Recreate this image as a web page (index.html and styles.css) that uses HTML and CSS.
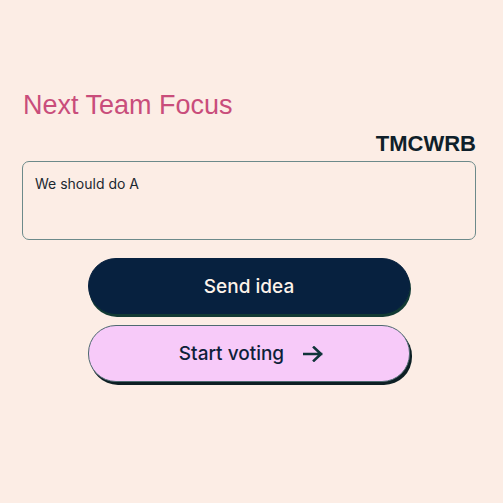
FILE: index.html
```html
<!DOCTYPE html>
<html>
<head>
<meta charset="utf-8">
<link rel="stylesheet" href="styles.css">
</head>
<body>
<main class="page">
  <h1 class="title">Next Team Focus</h1>
  <div class="code">TMCWRB</div>
  <div class="idea-box">We should do A</div>
  <div class="actions">
    <button class="btn btn-send">Send idea</button>
    <button class="btn btn-vote">Start voting
      <svg class="arrow" width="20" height="16" viewBox="0 0 20 16"><path d="M1 8H18M11 1.5L18 8L11 14.5" fill="none" stroke="#10333a" stroke-width="2.6" stroke-linecap="square"/></svg>
    </button>
  </div>
</main>
</body>
</html>
```
FILE: styles.css
```css
html, body {
  margin: 0;
  padding: 0;
  background: #fcede5;
}
body {
  font-family: "Inter", "Liberation Sans", sans-serif;
  width: 503px;
  height: 503px;
}
.page {
  padding: 87px 27px 0 22px;
  display: flex;
  flex-direction: column;
}
.title {
  margin: 0 0 0 1px;
  font-family: "Liberation Sans", sans-serif;
  font-weight: 400;
  font-size: 27px;
  line-height: 36px;
  color: #c94d7b;
}
.code {
  align-self: flex-end;
  margin-top: 9px;
  font-family: "Liberation Sans", sans-serif;
  font-weight: 700;
  font-size: 22px;
  line-height: 24px;
  color: #0f1f2a;
}
.idea-box {
  margin-top: 5px;
  height: 64px;
  border: 1.5px solid #6c8a8a;
  border-radius: 7px;
  padding: 13px 12px 0 12px;
  font-family: "Inter", sans-serif;
  font-size: 14px;
  color: #1b2830;
}
.actions {
  margin-top: 18px;
  display: flex;
  flex-direction: column;
  align-items: center;
  gap: 11px;
}
.btn {
  width: 322px;
  height: 56px;
  border-radius: 28px;
  font-family: "Inter", sans-serif;
  font-size: 19px;
  font-weight: 500;
  display: flex;
  align-items: center;
  justify-content: center;
  cursor: pointer;
}
.btn-send {
  background: #07213f;
  color: #fdf3ea;
  border: 1px solid #07213f;
  box-shadow: 1px 3px 0 #123a34;
}
.btn-vote {
  height: 57px;
  background: #f7caf9;
  color: #0e1f3a;
  border: 1px solid #4e6970;
  box-shadow: 2px 3px 0 #0d1f24;
  gap: 19px;
  padding-left: 10px;
}
.arrow {
  display: block;
}
```
